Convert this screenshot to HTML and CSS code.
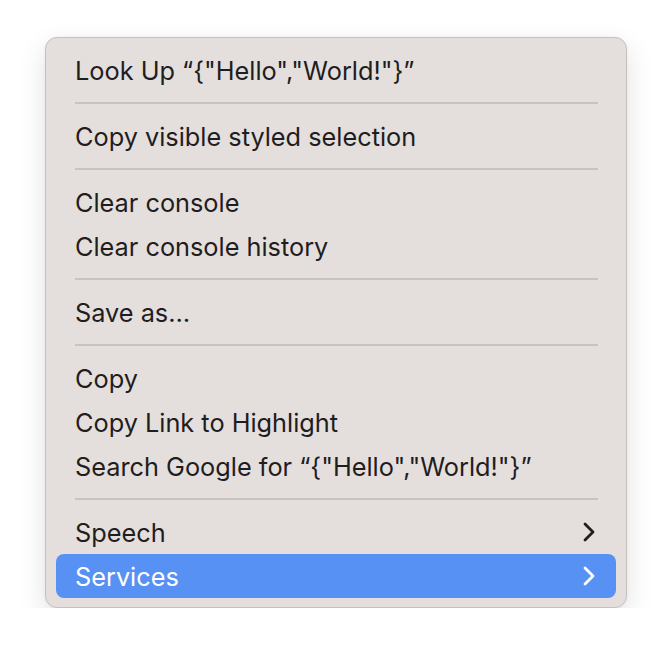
FILE: index.html
```html
<!DOCTYPE html>
<html>
<head>
<meta charset="utf-8">
<link rel="stylesheet" href="styles.css">
</head>
<body>
<div class="menu">
  <div class="item">Look Up “{"Hello","World!"}”</div>
  <div class="sep"></div>
  <div class="item">Copy visible styled selection</div>
  <div class="sep"></div>
  <div class="item">Clear console</div>
  <div class="item">Clear console history</div>
  <div class="sep"></div>
  <div class="item">Save as…</div>
  <div class="sep"></div>
  <div class="item">Copy</div>
  <div class="item">Copy Link to Highlight</div>
  <div class="item">Search Google for “{"Hello","World!"}”</div>
  <div class="sep"></div>
  <div class="item">Speech<svg class="chev" width="12" height="20" viewBox="0 0 12 20"><path d="M2 2 L10 10 L2 18" fill="none" stroke="currentColor" stroke-width="2.8" stroke-linecap="round" stroke-linejoin="round"/></svg></div>
  <div class="item active">Services<svg class="chev" width="12" height="20" viewBox="0 0 12 20"><path d="M2 2 L10 10 L2 18" fill="none" stroke="currentColor" stroke-width="2.8" stroke-linecap="round" stroke-linejoin="round"/></svg></div>
</div>
</body>
</html>
```
FILE: styles.css
```css
html, body {
  margin: 0;
  background: #ffffff;
}
body {
  padding: 37px 0 0 45px;
  font-family: Inter, "Liberation Sans", sans-serif;
}
.menu {
  width: 580px;
  box-sizing: content-box;
  padding: 10px 0 9px;
  background: #e4dfdd;
  border: 1px solid #c5c1bf;
  border-radius: 12px;
  box-shadow: 0 10px 28px rgba(0, 0, 0, 0.12), 0 0 3px rgba(0, 0, 0, 0.05);
}
.item {
  height: 44px;
  box-sizing: border-box;
  margin: 0 10px;
  padding: 1px 21px 0 19px;
  display: flex;
  align-items: center;
  justify-content: space-between;
  font-size: 25.3px;
  color: #1f1d1d;
  border-radius: 8px;
  white-space: nowrap;
}
.item.active {
  background: #5891f4;
  color: #ffffff;
}
.chev {
  display: block;
  margin-top: -1px;
  color: #1f1d1d;
}
.item.active .chev {
  color: #ffffff;
}
.sep {
  height: 22px;
  display: flex;
  align-items: center;
  padding: 0 28px 0 29px;
}
.sep::before {
  content: "";
  flex: 1;
  height: 2px;
  background: #c8c3c1;
}
```
